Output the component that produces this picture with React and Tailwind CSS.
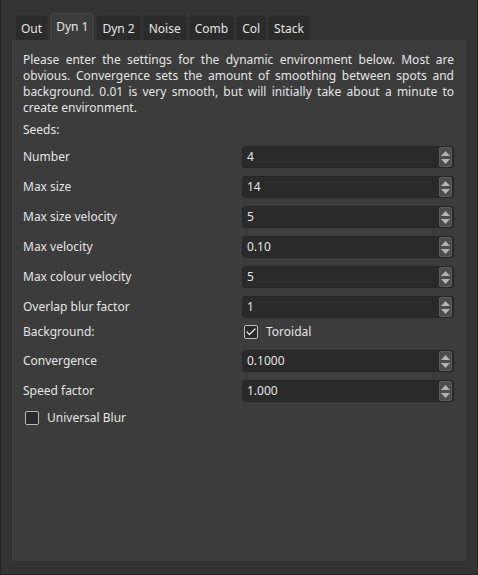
import { Check } from "lucide-react";

const tabs = ["Out", "Dyn 1", "Dyn 2", "Noise", "Comb", "Col", "Stack"];

const fields = [
  ["Number", "4"],
  ["Max size", "14"],
  ["Max size velocity", "5"],
  ["Max velocity", "0.10"],
  ["Max colour velocity", "5"],
  ["Overlap blur factor", "1"],
];

const lines = [
  "Please enter the settings for the dynamic environment below. Most are",
  "obvious. Convergence sets the amount of smoothing between spots and",
  "background. 0.01 is very smooth, but will initially take about a minute to",
];

function SpinBox({ value }) {
  return (
    <div className="flex items-center h-[22px] w-[212px] rounded-[3px] bg-[#2a2a2a] border border-[#262626] pl-[4px] pr-[1px]">
      <span className="flex-1">{value}</span>
      <div className="flex flex-col items-center justify-center gap-[3px] w-[13px] h-[20px] rounded-[2px] bg-[#4c4c4c] border border-[#5c5c5c]">
        <svg width="9" height="5" viewBox="0 0 9 5">
          <polygon points="0,5 4.5,0 9,5" fill="#b4b4b4" />
        </svg>
        <svg width="9" height="5" viewBox="0 0 9 5">
          <polygon points="0,0 4.5,5 9,0" fill="#b4b4b4" />
        </svg>
      </div>
    </div>
  );
}

function CheckBox({ checked }) {
  return (
    <div className="w-[14px] h-[14px] rounded-[2px] border border-[#bdbdbd] bg-[#2a2a2a] flex items-center justify-center">
      {checked && <Check size={12} strokeWidth={2.5} color="#e6e6e6" />}
    </div>
  );
}

export default function App() {
  return (
    <div
      className="w-[478px] h-[575px] bg-[#333333] border-l border-b border-r border-[#242424] text-[12px] text-[#e4e4e4] pt-[13px] px-[11px]"
      style={{ fontFamily: "'Noto Sans', 'Open Sans', sans-serif" }}
    >
      <div className="flex items-end gap-[2px] pl-[3px] h-[27px]">
        {tabs.map((t, i) =>
          i === 1 ? (
            <div
              key={t}
              className="h-[27px] px-[5px] flex items-center bg-[#3c3c3c] rounded-t-[4px] border border-b-0 border-[#444]"
            >
              {t}
            </div>
          ) : (
            <div
              key={t}
              className="h-[25px] px-[5px] flex items-center bg-[#2b2b2b] rounded-t-[4px] border border-b-0 border-[#303030] pt-[2px]"
            >
              {t}
            </div>
          )
        )}
      </div>
      <div className="h-[521px] bg-[#3c3c3c] px-[11px] pt-[12px]">
        <div className="w-[431px]">
          {lines.map((l) => (
            <div key={l} className="h-[16px] leading-[16px] text-justify [text-align-last:justify]">
              {l}
            </div>
          ))}
          <div className="h-[16px] leading-[16px]">create environment.</div>
        </div>
        <div className="mt-[6px] h-[16px] leading-[16px]">Seeds:</div>
        <div className="flex flex-col gap-[8px] mt-[8px]">
          {fields.map(([label, v]) => (
            <div key={label} className="flex items-center h-[22px]">
              <span className="w-[219px]">{label}</span>
              <SpinBox value={v} />
            </div>
          ))}
          <div className="flex items-center h-[18px] -mt-[3px]">
            <span className="w-[221px]">Background:</span>
            <CheckBox checked />
            <span className="ml-[8px]">Toroidal</span>
          </div>
          <div className="flex items-center h-[22px] mt-[1px]">
            <span className="w-[219px]">Convergence</span>
            <SpinBox value="0.1000" />
          </div>
          <div className="flex items-center h-[22px]">
            <span className="w-[219px]">Speed factor</span>
            <SpinBox value="1.000" />
          </div>
          <div className="flex items-center h-[16px] pl-[2px]">
            <CheckBox />
            <span className="ml-[8px]">Universal Blur</span>
          </div>
        </div>
      </div>
    </div>
  );
}
